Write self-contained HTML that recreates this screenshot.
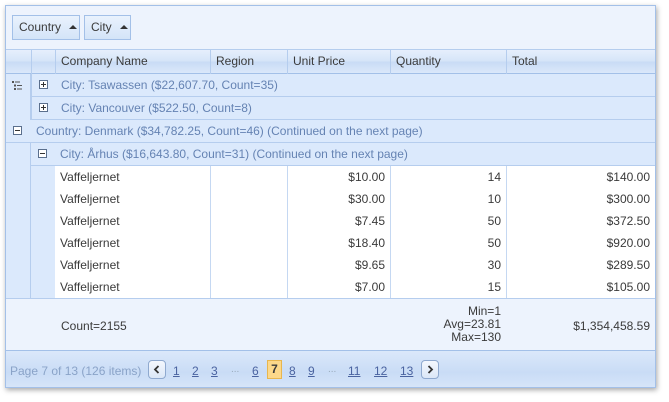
<!DOCTYPE html>
<html><head><meta charset="utf-8"><style>
*{box-sizing:border-box;margin:0;padding:0}
body{width:669px;height:402px;background:#fff;font-family:"Liberation Sans",Tahoma,sans-serif;font-size:12px;color:#3a3a3a;position:relative;overflow:hidden}
.grid{position:absolute;left:5px;top:5px;width:651px;height:383px;border:1px solid #a3c0e8;background:#edf3fd;box-shadow:1px 2px 5px rgba(0,0,0,.35)}
.a{position:absolute;white-space:nowrap}
.gb{position:absolute;top:9px;height:25px;border:1px solid #a3c0e8;background:linear-gradient(#e9f2fd,#d4e4f8);line-height:23px;padding-left:6px;font-size:12px}
.tri{display:inline-block;width:0;height:0;border-left:4px solid transparent;border-right:4px solid transparent;border-bottom:4px solid #333;vertical-align:2px;margin-left:8px}
.hdr{position:absolute;left:0;top:43px;width:649px;height:25px;background:linear-gradient(#e6effc,#d5e4f8 50%,#c8dbf5 51%,#dbe8fa);border-top:1px solid #b5cdee;border-bottom:1px solid #a3c0e8}
.hc{position:absolute;top:0;height:24px;line-height:23px;padding-left:5px;border-left:1px solid #b5cdee}
.row{position:absolute;height:23px;line-height:22px;border-bottom:1px solid #b5cdee;background:#dbe9fc;color:#6583b3}
.pm{position:absolute;width:9px;height:9px;border:1px solid #5a6f8d;background:#fff}
.pm:before{content:"";position:absolute;left:1px;top:3px;width:5px;height:1px;background:#333}
.pm.p:after{content:"";position:absolute;left:3px;top:1px;width:1px;height:5px;background:#333}
.dr{position:absolute;left:49px;width:600px;height:23px;background:#fff;border-bottom:1px solid #c5d8f2}
.dc{position:absolute;top:0;height:22px;line-height:22px;border-left:1px solid #c5d8f2;padding:0 5px}
.r{text-align:right}
.pg{position:absolute;left:0;top:344px;width:649px;height:37px;background:linear-gradient(#dbe8fa,#c9dcf6 60%,#d6e5f9);border-top:1px solid #a3c0e8}
.pg span{position:absolute;top:13px;color:#4a63a0;text-decoration:underline}
.btn{position:absolute;top:9px;width:18px;height:19px;border:1px solid #8fa9cf;border-radius:4px;background:linear-gradient(#f4f8fe,#dbe7f7)}
.btn svg{position:absolute;left:4px;top:4px}
</style></head><body>
<div class="grid">
  <div class="gb" style="left:6px;width:68px">Country<span class="tri"></span></div>
  <div class="gb" style="left:78px;width:47px">City<span class="tri"></span></div>
  <div class="hdr">
    <div class="hc" style="left:0;width:25px;border-left:none"></div>
    <div class="hc" style="left:25px;width:24px"></div>
    <div class="hc" style="left:49px;width:155px">Company Name</div>
    <div class="hc" style="left:204px;width:77px">Region</div>
    <div class="hc" style="left:281px;width:103px">Unit Price</div>
    <div class="hc" style="left:384px;width:116px">Quantity</div>
    <div class="hc" style="left:500px;width:149px">Total</div>
  </div>
  <div class="a" style="left:0;top:68px;width:25px;height:46px;background:#dbe9fc;border-right:1px solid #b5cdee"></div>
  <svg class="a" style="left:6px;top:75px" width="10" height="9"><rect x="0" y="0" width="2" height="2" fill="#555"/><rect x="3" y="0.5" width="5" height="1" fill="#555"/><rect x="2" y="3.5" width="2" height="2" fill="#555"/><rect x="5" y="4" width="5" height="1" fill="#555"/><rect x="2" y="7" width="2" height="2" fill="#555"/><rect x="5" y="7.5" width="5" height="1" fill="#555"/></svg>
  <div class="row" style="left:25px;top:68px;width:624px;border-left:1px solid #b5cdee"><div class="pm p" style="left:7px;top:6px"></div><span style="position:absolute;left:29px">City: Tsawassen ($22,607.70, Count=35)</span></div>
  <div class="row" style="left:25px;top:91px;width:624px;border-left:1px solid #b5cdee"><div class="pm p" style="left:7px;top:6px"></div><span style="position:absolute;left:29px">City: Vancouver ($522.50, Count=8)</span></div>
  <div class="row" style="left:0;top:114px;width:649px"><div class="pm" style="left:7px;top:6px"></div><span style="position:absolute;left:30px">Country: Denmark ($34,782.25, Count=46) (Continued on the next page)</span></div>
  <div class="a" style="left:0;top:137px;width:25px;height:155px;background:#dbe9fc;border-right:1px solid #b5cdee"></div>
  <div class="row" style="left:25px;top:137px;width:624px"><div class="pm" style="left:7px;top:6px"></div><span style="position:absolute;left:29px">City: Århus ($16,643.80, Count=31) (Continued on the next page)</span></div>
  <div class="a" style="left:25px;top:160px;width:24px;height:132px;background:#dbe9fc"></div>
  <div class="dr" style="top:160px"><div class="dc" style="left:0;width:155px;border-left:none">Vaffeljernet</div><div class="dc" style="left:155px;width:77px"></div><div class="dc r" style="left:232px;width:103px">$10.00</div><div class="dc r" style="left:335px;width:116px">14</div><div class="dc r" style="left:451px;width:149px">$140.00</div></div>
  <div class="dr" style="top:182px"><div class="dc" style="left:0;width:155px;border-left:none">Vaffeljernet</div><div class="dc" style="left:155px;width:77px"></div><div class="dc r" style="left:232px;width:103px">$30.00</div><div class="dc r" style="left:335px;width:116px">10</div><div class="dc r" style="left:451px;width:149px">$300.00</div></div>
  <div class="dr" style="top:204px"><div class="dc" style="left:0;width:155px;border-left:none">Vaffeljernet</div><div class="dc" style="left:155px;width:77px"></div><div class="dc r" style="left:232px;width:103px">$7.45</div><div class="dc r" style="left:335px;width:116px">50</div><div class="dc r" style="left:451px;width:149px">$372.50</div></div>
  <div class="dr" style="top:226px"><div class="dc" style="left:0;width:155px;border-left:none">Vaffeljernet</div><div class="dc" style="left:155px;width:77px"></div><div class="dc r" style="left:232px;width:103px">$18.40</div><div class="dc r" style="left:335px;width:116px">50</div><div class="dc r" style="left:451px;width:149px">$920.00</div></div>
  <div class="dr" style="top:248px"><div class="dc" style="left:0;width:155px;border-left:none">Vaffeljernet</div><div class="dc" style="left:155px;width:77px"></div><div class="dc r" style="left:232px;width:103px">$9.65</div><div class="dc r" style="left:335px;width:116px">30</div><div class="dc r" style="left:451px;width:149px">$289.50</div></div>
  <div class="dr" style="top:270px;height:22px;border-bottom:none"><div class="dc" style="left:0;width:155px;border-left:none">Vaffeljernet</div><div class="dc" style="left:155px;width:77px"></div><div class="dc r" style="left:232px;width:103px">$7.00</div><div class="dc r" style="left:335px;width:116px">15</div><div class="dc r" style="left:451px;width:149px">$105.00</div></div>
  <div class="a" style="left:0;top:292px;width:649px;height:52px;background:#edf3fd;border-top:1px solid #b5cdee"></div>
  <div class="a" style="left:55px;top:313px">Count=2155</div>
  <div class="a r" style="left:400px;top:299px;width:95px;line-height:13px">Min=1<br>Avg=23.81<br>Max=130</div>
  <div class="a r" style="left:500px;top:313px;width:144px">$1,354,458.59</div>
  <div class="pg">
    <div class="a" style="left:4px;top:13px;color:#8aa3c8">Page 7 of 13 (126 items)</div>
    <div class="btn" style="left:142px"><svg width="8" height="9"><path d="M5.5 1 L2 4.5 L5.5 8" stroke="#333" stroke-width="1.8" fill="none"/></svg></div>
    <span style="left:167px">1</span><span style="left:186px">2</span><span style="left:205px">3</span>
    <div class="a" style="left:225px;top:13px;color:#9ab;font-size:10px">...</div>
    <span style="left:246px">6</span>
    <div class="a" style="left:261px;top:9px;width:15px;height:19px;background:#fcd88a;border:1px solid #e8b64e;text-align:center;line-height:17px;font-weight:bold">7</div>
    <span style="left:283px">8</span><span style="left:302px">9</span>
    <div class="a" style="left:322px;top:13px;color:#9ab;font-size:10px">...</div>
    <span style="left:342px">11</span><span style="left:368px">12</span><span style="left:394px">13</span>
    <div class="btn" style="left:415px"><svg width="8" height="9"><path d="M2.5 1 L6 4.5 L2.5 8" stroke="#333" stroke-width="1.8" fill="none"/></svg></div>
  </div>
</div>
</body></html>
